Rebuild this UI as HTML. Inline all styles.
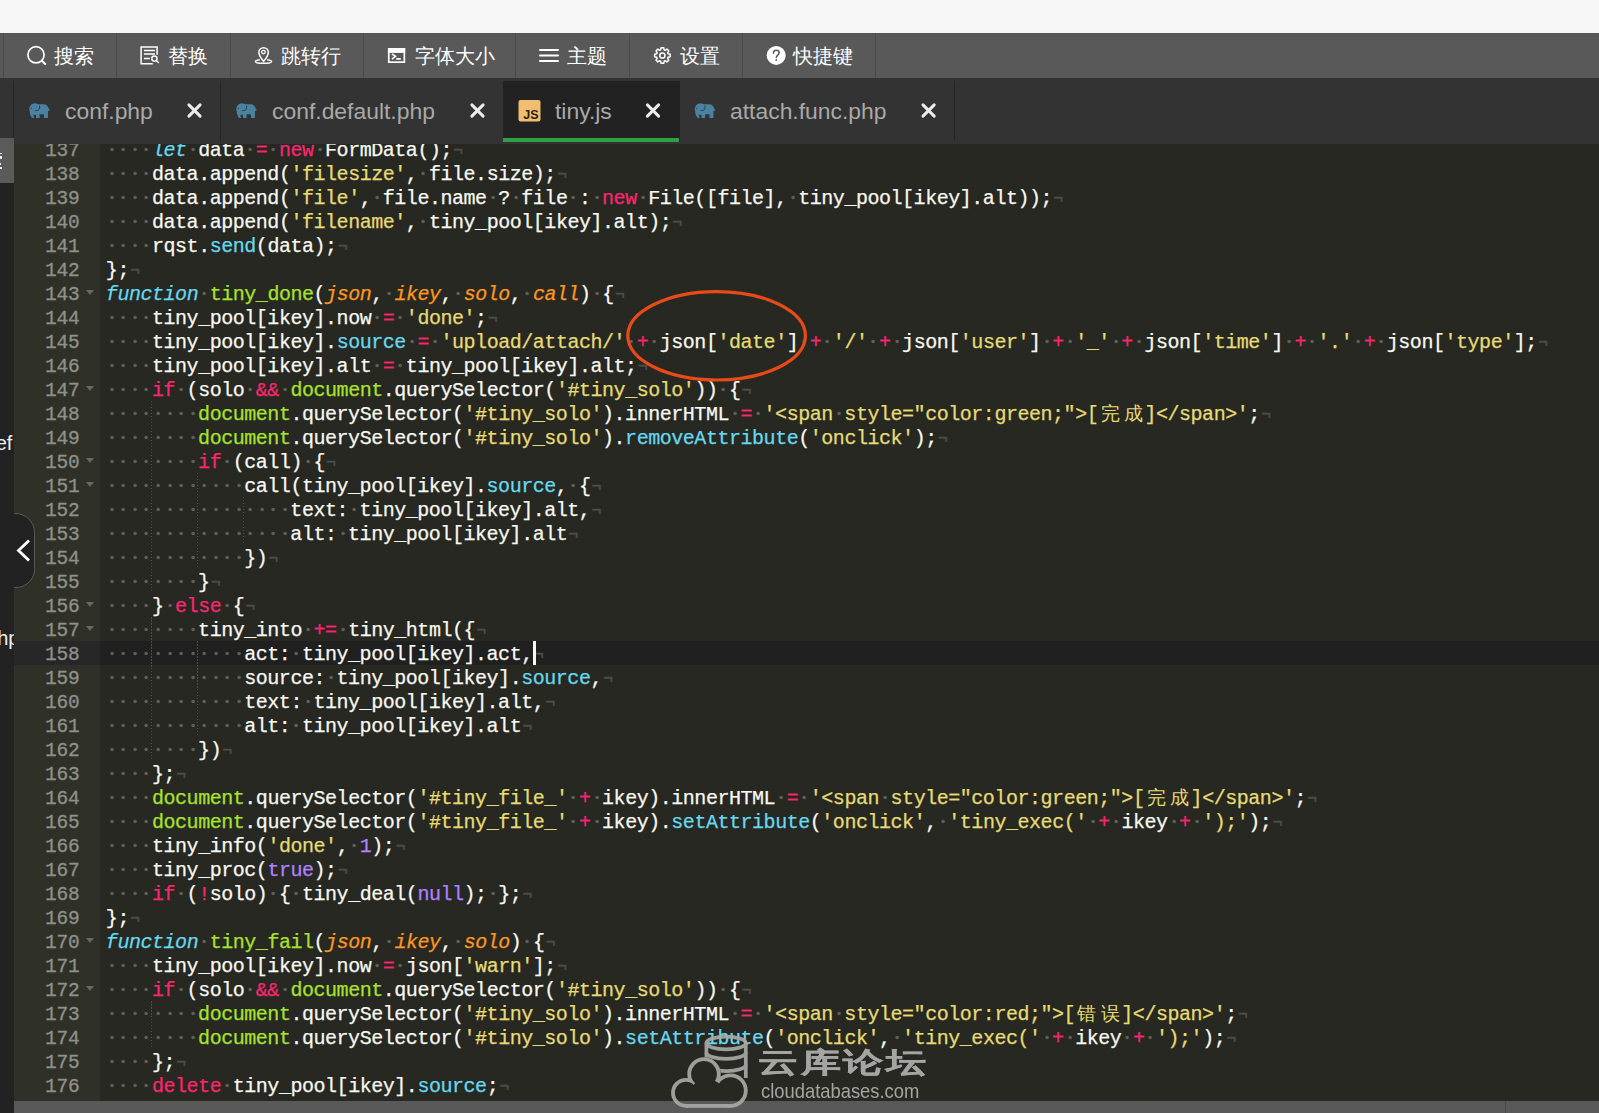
<!DOCTYPE html>
<html><head><meta charset="utf-8">
<style>
*{margin:0;padding:0;box-sizing:border-box}
html,body{width:1599px;height:1113px;overflow:hidden;background:#f7f7f7;font-family:"Liberation Sans",sans-serif}
#top{position:absolute;left:0;top:0;width:1599px;height:33px;background:#f7f7f7}
#tb{position:absolute;left:0;top:33px;width:1599px;height:45px;background:#595959}
.lbl{position:absolute;top:1px;height:45px;color:#fff;font-size:20px;line-height:45px;white-space:nowrap}
.sep{position:absolute;top:0;width:1px;height:45px;background:#4b4b4b}
#tabs{position:absolute;left:0;top:78px;width:1599px;height:66px;background:#333}
.nm{position:absolute;top:81px;line-height:60px;font-size:22.9px;color:#a9a9a9;white-space:nowrap}
.tsep{position:absolute;top:3px;width:1px;height:60px;background:#262626}
#left{position:absolute;left:0;top:138px;width:14px;height:975px;background:#222;overflow:hidden}
#left .f{position:absolute;color:#eee;font-size:20px;line-height:20px;white-space:nowrap}
#gut{position:absolute;left:14px;top:144px;width:86px;height:957px;background:#2f3129;overflow:hidden}
#code{position:absolute;left:100px;top:144px;width:1499px;height:957px;background:#272822;overflow:hidden}
.gn{position:absolute;left:0;width:86px;height:24px;font-family:"Liberation Mono",monospace;font-size:19.5px;letter-spacing:-0.15px;-webkit-text-stroke:0.3px currentColor;line-height:24px;color:#8f908a;padding-left:31px;padding-top:1.5px}
.gn.act{background:#272727}
.gn u{position:absolute;left:71.8px;top:9px;width:0;height:0;border-left:4.2px solid transparent;border-right:4.2px solid transparent;border-top:5px solid #686963}
.ln{position:absolute;left:0;width:1499px;height:24px;font-family:"Liberation Mono",monospace;font-size:20px;letter-spacing:-0.4617px;-webkit-text-stroke:0.25px currentColor;line-height:24px;color:#f8f8f2;white-space:pre;padding-left:5.85px;padding-top:2px}
.ln.act{background:#202020}
.ln i{font-style:normal;display:inline-block;width:11.54px;height:24px;vertical-align:top;margin-top:-2px;color:transparent;background:radial-gradient(circle at 6.1px 12.5px,#5f5f59 0,#5f5f59 1.3px,rgba(95,95,89,0) 2.1px)}
.ln i.e{background:none;color:#4e4e49;margin-top:0;height:auto;width:auto;vertical-align:1px;font-size:16px;position:relative;left:1.3px;-webkit-text-stroke:0.55px currentColor}
.ln b{font-weight:normal;display:inline-block;width:23.08px;text-align:center;font-size:19px;-webkit-text-stroke:0}
.k{color:#f92672}
.st{color:#66d9ef;font-style:italic}
.fn{color:#a6e22e}
.pa{color:#fd971f;font-style:italic}
.s{color:#e6db74}
.sf{color:#66d9ef}
.v{color:#a6e22e}
.c{color:#ae81ff}
.ig{position:absolute;width:1px;background:repeating-linear-gradient(to bottom,#4e4e48 0,#4e4e48 1.5px,transparent 1.5px,transparent 3px)}
#bot{position:absolute;left:14px;top:1101px;width:1585px;height:12px;background:#595959}
</style></head><body>
<div id="top"></div>
<div id="tb">
  <div class="sep" style="left:3px"></div>
  <div class="sep" style="left:116px"></div>
  <div class="sep" style="left:230px"></div>
  <div class="sep" style="left:363px"></div>
  <div class="sep" style="left:515px"></div>
  <div class="sep" style="left:629px"></div>
  <div class="sep" style="left:742px"></div>
  <div class="sep" style="left:875px"></div>
  <svg style="position:absolute;left:0;top:0" width="900" height="45" viewBox="0 0 900 45" fill="none" stroke="#fff">
    <circle cx="36" cy="21.8" r="8.1" stroke-width="1.7"/>
    <path d="M41.9 27.7 L45.2 30.9" stroke-width="2.1" stroke-linecap="round"/>
    <path d="M157.1 21.7 V14.1 H141.1 V30.7 H152.8" stroke-width="1.5"/>
    <path d="M143.9 17.4 H155 M143.9 21 H155 M143.9 25.5 H149.8" stroke-width="1.5"/>
    <circle cx="154.4" cy="25.6" r="2.6" stroke-width="1.4"/>
    <path d="M156.3 27.5 L158.4 29.5" stroke-width="1.6" stroke-linecap="round"/>
    <path d="M263.6 28.4 C260.2 24.2 258.85 21.6 258.85 19.45 A4.75 4.75 0 0 1 268.35 19.45 C268.35 21.6 267 24.2 263.6 28.4 Z" stroke-width="1.5"/>
    <circle cx="263.5" cy="19.1" r="1.8" stroke-width="1.3"/>
    <path d="M259.9 26.7 C257 27.1 255.4 27.7 255.4 28.4 C255.4 29.5 259 30.2 263.5 30.2 C268 30.2 271.6 29.5 271.6 28.4 C271.6 27.7 270 27.1 267.1 26.7" stroke-width="1.5"/>
    <rect x="388.75" y="15.85" width="15.6" height="13.3" stroke-width="1.7"/>
    <rect x="388" y="15" width="17.2" height="4.9" fill="#fff" stroke="none"/>
    <path d="M391.9 20.9 L395.5 23.4 L391.9 26.2" stroke-width="1.6"/>
    <path d="M396.2 25.9 H400.8" stroke-width="1.7"/>
    <path d="M540 17.1 H558 M540 22.4 H558 M540 27.9 H558" stroke-width="2" stroke-linecap="round"/>
    <path d="M660.66 16.86 L661.06 14.71 L663.74 14.71 L664.14 16.86 L665.15 17.28 L666.96 16.05 L668.85 17.94 L667.62 19.75 L668.04 20.76 L670.19 21.16 L670.19 23.84 L668.04 24.24 L667.62 25.25 L668.85 27.06 L666.96 28.95 L665.15 27.72 L664.14 28.14 L663.74 30.29 L661.06 30.29 L660.66 28.14 L659.65 27.72 L657.84 28.95 L655.95 27.06 L657.18 25.25 L656.76 24.24 L654.61 23.84 L654.61 21.16 L656.76 20.76 L657.18 19.75 L655.95 17.94 L657.84 16.05 L659.65 17.28 Z" stroke-width="1.5" stroke-linejoin="round"/>
    <circle cx="662.4" cy="22.5" r="2.6" stroke-width="1.5"/>
    <circle cx="776.2" cy="22.4" r="9.5" fill="#fff" stroke="none"/>
    <path d="M773.4 20.3 C773.4 18.4 774.7 17.3 776.3 17.3 C777.9 17.3 779.1 18.4 779.1 19.8 C779.1 21.9 776.3 22.3 776.3 24.6" stroke="#595959" stroke-width="1.5" stroke-linecap="round"/>
    <circle cx="776.3" cy="26.9" r="0.95" fill="#595959" stroke="none"/>
  </svg>
  <div class="lbl" style="left:54px">搜索</div>
  <div class="lbl" style="left:168px">替换</div>
  <div class="lbl" style="left:281px">跳转行</div>
  <div class="lbl" style="left:415px">字体大小</div>
  <div class="lbl" style="left:567px">主题</div>
  <div class="lbl" style="left:680px">设置</div>
  <div class="lbl" style="left:793px">快捷键</div>
</div>
<div id="tabs">
  <div class="tsep" style="left:13px"></div>
  <div class="tsep" style="left:220px"></div>
  <div class="tsep" style="left:954px"></div>
  <div style="position:absolute;left:503px;top:3px;width:177px;height:61px;background:#222"></div>
  <div style="position:absolute;left:503px;top:60px;width:176px;height:4px;background:#2ea043"></div>
</div>
<svg style="position:absolute;left:0;top:0" width="1000" height="145" viewBox="0 0 1000 145">
  <defs>
    <g id="eleph">
      <ellipse cx="5.9" cy="6.1" rx="5.7" ry="5.9" fill="#4b82a0"/>
      <path d="M8 1.2 H14.5 C17.5 1.2 19 3 19.6 5.2 L21 7.2 L19 7.9 L18.9 15 H15 V11.3 H10.6 V15 H7 V9 Z" fill="#4b82a0"/>
      <path d="M0.6 8.5 C0.8 11.5 1.8 13.3 3.2 15 L5.4 15 C4.5 13.4 3.9 11.8 4.4 10 Z" fill="#4b82a0"/>
      <path d="M6.2 7.4 C9.4 8.2 11.2 6.2 10.4 2.6" fill="none" stroke="#23394a" stroke-width="0.9"/>
      <circle cx="2.3" cy="5.3" r="0.6" fill="#23394a"/>
    </g>
    <path id="xx" d="M1.7 1.7 L12.9 12.9 M12.9 1.7 L1.7 12.9" stroke="#ececec" stroke-width="3" stroke-linecap="round"/>
  </defs>
  <use href="#eleph" x="29" y="103"/>
  <use href="#eleph" x="236" y="103"/>
  <use href="#eleph" x="694.5" y="103"/>
  <use href="#xx" x="187.2" y="103.2"/>
  <use href="#xx" x="470.2" y="103.2"/>
  <use href="#xx" x="645.7" y="103.2"/>
  <use href="#xx" x="921.3" y="103.2"/>
  <rect x="518.5" y="100" width="22" height="21.5" rx="2" fill="#f1bd70"/>
  <text x="538.5" y="119" text-anchor="end" font-family="Liberation Sans" font-size="12.5" font-weight="bold" fill="#2a1d0f">JS</text>
</svg>
<div class="nm" style="left:65px">conf.php</div>
<div class="nm" style="left:272px">conf.default.php</div>
<div class="nm" style="left:555px">tiny.js</div>
<div class="nm" style="left:730px">attach.func.php</div>
<div id="left">
  <div style="position:absolute;left:0;top:0;width:14px;height:45px;background:#5a5a5a"><div style="position:absolute;left:0;top:14.6px;width:1.9px;height:1.6px;background:#eee"></div><div style="position:absolute;left:0;top:17.8px;width:2px;height:3.4px;background:#eee"></div><div style="position:absolute;left:0;top:25px;width:1.2px;height:1.9px;background:#eee"></div><div style="position:absolute;left:0;top:29.1px;width:2px;height:2.2px;background:#eee"></div></div>
  <div class="f" style="left:-4.3px;top:295px">ef</div>
  <div class="f" style="left:-2.8px;top:490px">hp</div>
</div>
<div id="gut">
<div style="position:absolute;left:0;top:-144px">
<div class="gn" style="top:137px">137</div>
<div class="gn" style="top:161px">138</div>
<div class="gn" style="top:185px">139</div>
<div class="gn" style="top:209px">140</div>
<div class="gn" style="top:233px">141</div>
<div class="gn" style="top:257px">142</div>
<div class="gn" style="top:281px">143<u></u></div>
<div class="gn" style="top:305px">144</div>
<div class="gn" style="top:329px">145</div>
<div class="gn" style="top:353px">146</div>
<div class="gn" style="top:377px">147<u></u></div>
<div class="gn" style="top:401px">148</div>
<div class="gn" style="top:425px">149</div>
<div class="gn" style="top:449px">150<u></u></div>
<div class="gn" style="top:473px">151<u></u></div>
<div class="gn" style="top:497px">152</div>
<div class="gn" style="top:521px">153</div>
<div class="gn" style="top:545px">154</div>
<div class="gn" style="top:569px">155</div>
<div class="gn" style="top:593px">156<u></u></div>
<div class="gn" style="top:617px">157<u></u></div>
<div class="gn act" style="top:641px">158</div>
<div class="gn" style="top:665px">159</div>
<div class="gn" style="top:689px">160</div>
<div class="gn" style="top:713px">161</div>
<div class="gn" style="top:737px">162</div>
<div class="gn" style="top:761px">163</div>
<div class="gn" style="top:785px">164</div>
<div class="gn" style="top:809px">165</div>
<div class="gn" style="top:833px">166</div>
<div class="gn" style="top:857px">167</div>
<div class="gn" style="top:881px">168</div>
<div class="gn" style="top:905px">169</div>
<div class="gn" style="top:929px">170<u></u></div>
<div class="gn" style="top:953px">171</div>
<div class="gn" style="top:977px">172<u></u></div>
<div class="gn" style="top:1001px">173</div>
<div class="gn" style="top:1025px">174</div>
<div class="gn" style="top:1049px">175</div>
<div class="gn" style="top:1073px">176</div>
<div class="gn" style="top:1097px">177</div>
</div>
</div>
<div id="code">
<div style="position:absolute;left:0;top:-144px">
<div class="ln" style="top:137px"><i>·</i><i>·</i><i>·</i><i>·</i><span class="st">let</span><i>·</i>data<i>·</i><span class="k">=</span><i>·</i><span class="k">new</span><i>·</i>FormData();<i class="e">¬</i></div>
<div class="ln" style="top:161px"><i>·</i><i>·</i><i>·</i><i>·</i>data.append(<span class="s">'filesize'</span>,<i>·</i>file.size);<i class="e">¬</i></div>
<div class="ln" style="top:185px"><i>·</i><i>·</i><i>·</i><i>·</i>data.append(<span class="s">'file'</span>,<i>·</i>file.name<i>·</i>?<i>·</i>file<i>·</i>:<i>·</i><span class="k">new</span><i>·</i>File([file],<i>·</i>tiny_pool[ikey].alt));<i class="e">¬</i></div>
<div class="ln" style="top:209px"><i>·</i><i>·</i><i>·</i><i>·</i>data.append(<span class="s">'filename'</span>,<i>·</i>tiny_pool[ikey].alt);<i class="e">¬</i></div>
<div class="ln" style="top:233px"><i>·</i><i>·</i><i>·</i><i>·</i>rqst.<span class="sf">send</span>(data);<i class="e">¬</i></div>
<div class="ln" style="top:257px">};<i class="e">¬</i></div>
<div class="ln" style="top:281px"><span class="st">function</span><i>·</i><span class="fn">tiny_done</span>(<span class="pa">json</span>,<i>·</i><span class="pa">ikey</span>,<i>·</i><span class="pa">solo</span>,<i>·</i><span class="pa">call</span>)<i>·</i>{<i class="e">¬</i></div>
<div class="ln" style="top:305px"><i>·</i><i>·</i><i>·</i><i>·</i>tiny_pool[ikey].now<i>·</i><span class="k">=</span><i>·</i><span class="s">'done'</span>;<i class="e">¬</i></div>
<div class="ln" style="top:329px"><i>·</i><i>·</i><i>·</i><i>·</i>tiny_pool[ikey].<span class="sf">source</span><i>·</i><span class="k">=</span><i>·</i><span class="s">'upload/attach/'</span><i>·</i><span class="k">+</span><i>·</i>json[<span class="s">'date'</span>]<i>·</i><span class="k">+</span><i>·</i><span class="s">'/'</span><i>·</i><span class="k">+</span><i>·</i>json[<span class="s">'user'</span>]<i>·</i><span class="k">+</span><i>·</i><span class="s">'_'</span><i>·</i><span class="k">+</span><i>·</i>json[<span class="s">'time'</span>]<i>·</i><span class="k">+</span><i>·</i><span class="s">'.'</span><i>·</i><span class="k">+</span><i>·</i>json[<span class="s">'type'</span>];<i class="e">¬</i></div>
<div class="ln" style="top:353px"><i>·</i><i>·</i><i>·</i><i>·</i>tiny_pool[ikey].alt<i>·</i><span class="k">=</span><i>·</i>tiny_pool[ikey].alt;<i class="e">¬</i></div>
<div class="ln" style="top:377px"><i>·</i><i>·</i><i>·</i><i>·</i><span class="k">if</span><i>·</i>(solo<i>·</i><span class="k">&amp;&amp;</span><i>·</i><span class="v">document</span>.querySelector(<span class="s">'#tiny_solo'</span>))<i>·</i>{<i class="e">¬</i></div>
<div class="ln" style="top:401px"><i>·</i><i>·</i><i>·</i><i>·</i><i>·</i><i>·</i><i>·</i><i>·</i><span class="v">document</span>.querySelector(<span class="s">'#tiny_solo'</span>).innerHTML<i>·</i><span class="k">=</span><i>·</i><span class="s">'&lt;span<i>·</i>style="color:green;"&gt;[<b>完</b><b>成</b>]&lt;/span&gt;'</span>;<i class="e">¬</i></div>
<div class="ln" style="top:425px"><i>·</i><i>·</i><i>·</i><i>·</i><i>·</i><i>·</i><i>·</i><i>·</i><span class="v">document</span>.querySelector(<span class="s">'#tiny_solo'</span>).<span class="sf">removeAttribute</span>(<span class="s">'onclick'</span>);<i class="e">¬</i></div>
<div class="ln" style="top:449px"><i>·</i><i>·</i><i>·</i><i>·</i><i>·</i><i>·</i><i>·</i><i>·</i><span class="k">if</span><i>·</i>(call)<i>·</i>{<i class="e">¬</i></div>
<div class="ln" style="top:473px"><i>·</i><i>·</i><i>·</i><i>·</i><i>·</i><i>·</i><i>·</i><i>·</i><i>·</i><i>·</i><i>·</i><i>·</i>call(tiny_pool[ikey].<span class="sf">source</span>,<i>·</i>{<i class="e">¬</i></div>
<div class="ln" style="top:497px"><i>·</i><i>·</i><i>·</i><i>·</i><i>·</i><i>·</i><i>·</i><i>·</i><i>·</i><i>·</i><i>·</i><i>·</i><i>·</i><i>·</i><i>·</i><i>·</i>text:<i>·</i>tiny_pool[ikey].alt,<i class="e">¬</i></div>
<div class="ln" style="top:521px"><i>·</i><i>·</i><i>·</i><i>·</i><i>·</i><i>·</i><i>·</i><i>·</i><i>·</i><i>·</i><i>·</i><i>·</i><i>·</i><i>·</i><i>·</i><i>·</i>alt:<i>·</i>tiny_pool[ikey].alt<i class="e">¬</i></div>
<div class="ln" style="top:545px"><i>·</i><i>·</i><i>·</i><i>·</i><i>·</i><i>·</i><i>·</i><i>·</i><i>·</i><i>·</i><i>·</i><i>·</i>})<i class="e">¬</i></div>
<div class="ln" style="top:569px"><i>·</i><i>·</i><i>·</i><i>·</i><i>·</i><i>·</i><i>·</i><i>·</i>}<i class="e">¬</i></div>
<div class="ln" style="top:593px"><i>·</i><i>·</i><i>·</i><i>·</i>}<i>·</i><span class="k">else</span><i>·</i>{<i class="e">¬</i></div>
<div class="ln" style="top:617px"><i>·</i><i>·</i><i>·</i><i>·</i><i>·</i><i>·</i><i>·</i><i>·</i>tiny_into<i>·</i><span class="k">+=</span><i>·</i>tiny_html({<i class="e">¬</i></div>
<div class="ln act" style="top:641px"><i>·</i><i>·</i><i>·</i><i>·</i><i>·</i><i>·</i><i>·</i><i>·</i><i>·</i><i>·</i><i>·</i><i>·</i>act:<i>·</i>tiny_pool[ikey].act,<i class="e">¬</i></div>
<div class="ln" style="top:665px"><i>·</i><i>·</i><i>·</i><i>·</i><i>·</i><i>·</i><i>·</i><i>·</i><i>·</i><i>·</i><i>·</i><i>·</i>source:<i>·</i>tiny_pool[ikey].<span class="sf">source</span>,<i class="e">¬</i></div>
<div class="ln" style="top:689px"><i>·</i><i>·</i><i>·</i><i>·</i><i>·</i><i>·</i><i>·</i><i>·</i><i>·</i><i>·</i><i>·</i><i>·</i>text:<i>·</i>tiny_pool[ikey].alt,<i class="e">¬</i></div>
<div class="ln" style="top:713px"><i>·</i><i>·</i><i>·</i><i>·</i><i>·</i><i>·</i><i>·</i><i>·</i><i>·</i><i>·</i><i>·</i><i>·</i>alt:<i>·</i>tiny_pool[ikey].alt<i class="e">¬</i></div>
<div class="ln" style="top:737px"><i>·</i><i>·</i><i>·</i><i>·</i><i>·</i><i>·</i><i>·</i><i>·</i>})<i class="e">¬</i></div>
<div class="ln" style="top:761px"><i>·</i><i>·</i><i>·</i><i>·</i>};<i class="e">¬</i></div>
<div class="ln" style="top:785px"><i>·</i><i>·</i><i>·</i><i>·</i><span class="v">document</span>.querySelector(<span class="s">'#tiny_file_'</span><i>·</i><span class="k">+</span><i>·</i>ikey).innerHTML<i>·</i><span class="k">=</span><i>·</i><span class="s">'&lt;span<i>·</i>style="color:green;"&gt;[<b>完</b><b>成</b>]&lt;/span&gt;'</span>;<i class="e">¬</i></div>
<div class="ln" style="top:809px"><i>·</i><i>·</i><i>·</i><i>·</i><span class="v">document</span>.querySelector(<span class="s">'#tiny_file_'</span><i>·</i><span class="k">+</span><i>·</i>ikey).<span class="sf">setAttribute</span>(<span class="s">'onclick'</span>,<i>·</i><span class="s">'tiny_exec('</span><i>·</i><span class="k">+</span><i>·</i>ikey<i>·</i><span class="k">+</span><i>·</i><span class="s">');'</span>);<i class="e">¬</i></div>
<div class="ln" style="top:833px"><i>·</i><i>·</i><i>·</i><i>·</i>tiny_info(<span class="s">'done'</span>,<i>·</i><span class="c">1</span>);<i class="e">¬</i></div>
<div class="ln" style="top:857px"><i>·</i><i>·</i><i>·</i><i>·</i>tiny_proc(<span class="c">true</span>);<i class="e">¬</i></div>
<div class="ln" style="top:881px"><i>·</i><i>·</i><i>·</i><i>·</i><span class="k">if</span><i>·</i>(<span class="k">!</span>solo)<i>·</i>{<i>·</i>tiny_deal(<span class="c">null</span>);<i>·</i>};<i class="e">¬</i></div>
<div class="ln" style="top:905px">};<i class="e">¬</i></div>
<div class="ln" style="top:929px"><span class="st">function</span><i>·</i><span class="fn">tiny_fail</span>(<span class="pa">json</span>,<i>·</i><span class="pa">ikey</span>,<i>·</i><span class="pa">solo</span>)<i>·</i>{<i class="e">¬</i></div>
<div class="ln" style="top:953px"><i>·</i><i>·</i><i>·</i><i>·</i>tiny_pool[ikey].now<i>·</i><span class="k">=</span><i>·</i>json[<span class="s">'warn'</span>];<i class="e">¬</i></div>
<div class="ln" style="top:977px"><i>·</i><i>·</i><i>·</i><i>·</i><span class="k">if</span><i>·</i>(solo<i>·</i><span class="k">&amp;&amp;</span><i>·</i><span class="v">document</span>.querySelector(<span class="s">'#tiny_solo'</span>))<i>·</i>{<i class="e">¬</i></div>
<div class="ln" style="top:1001px"><i>·</i><i>·</i><i>·</i><i>·</i><i>·</i><i>·</i><i>·</i><i>·</i><span class="v">document</span>.querySelector(<span class="s">'#tiny_solo'</span>).innerHTML<i>·</i><span class="k">=</span><i>·</i><span class="s">'&lt;span<i>·</i>style="color:red;"&gt;[<b>错</b><b>误</b>]&lt;/span&gt;'</span>;<i class="e">¬</i></div>
<div class="ln" style="top:1025px"><i>·</i><i>·</i><i>·</i><i>·</i><i>·</i><i>·</i><i>·</i><i>·</i><span class="v">document</span>.querySelector(<span class="s">'#tiny_solo'</span>).<span class="sf">setAttribute</span>(<span class="s">'onclick'</span>,<i>·</i><span class="s">'tiny_exec('</span><i>·</i><span class="k">+</span><i>·</i>ikey<i>·</i><span class="k">+</span><i>·</i><span class="s">');'</span>);<i class="e">¬</i></div>
<div class="ln" style="top:1049px"><i>·</i><i>·</i><i>·</i><i>·</i>};<i class="e">¬</i></div>
<div class="ln" style="top:1073px"><i>·</i><i>·</i><i>·</i><i>·</i><span class="k">delete</span><i>·</i>tiny_pool[ikey].<span class="sf">source</span>;<i class="e">¬</i></div>
<div class="ln" style="top:1097px"><i>·</i><i>·</i><i>·</i><i>·</i><span class="v">document</span>.querySelector(<span class="s">'#tiny_file_'</span><i>·</i><span class="k">+</span><i>·</i>ikey).innerHTML<i>·</i><span class="k">=</span><i>·</i><span class="s">'&lt;span<i>·</i>style="color:red;"&gt;[<b>错</b><b>误</b>]&lt;/span&gt;'</span>;<i class="e">¬</i></div>
<div class="ig" style="left:51.11px;top:401px;height:192px"></div>
<div class="ig" style="left:97.27px;top:473px;height:96px"></div>
<div class="ig" style="left:143.43px;top:497px;height:48px"></div>
<div class="ig" style="left:51.11px;top:617px;height:144px"></div>
<div class="ig" style="left:97.27px;top:641px;height:96px"></div>
<div class="ig" style="left:51.11px;top:1001px;height:48px"></div>
</div>
</div>
<div id="bot"><div style="position:absolute;left:1491px;top:0;width:1px;height:12px;background:#4b4b4b"></div></div>
<svg style="position:absolute;left:14px;top:510px" width="24" height="80" viewBox="0 0 24 80">
  <path d="M0 3.5 H0.5 A19 19 0 0 1 20.5 22.5 V55.5 A19 19 0 0 1 0.5 77.5 H0" fill="#222" stroke="#5a5a55" stroke-width="1"/>
  <path d="M15 30.5 L4.5 40.5 L15 50.5" fill="none" stroke="#fff" stroke-width="2.8"/>
</svg>
<div id="cursor" style="position:absolute;left:533.4px;top:640.5px;width:3px;height:24px;background:#f8f8f0"></div>
<svg style="position:absolute;left:0;top:0" width="1599" height="1113" viewBox="0 0 1599 1113">
  <ellipse cx="716.6" cy="335.8" rx="88.8" ry="44.2" fill="none" stroke="#e84a18" stroke-width="3.2"/>
  <defs>
    <mask id="cloudOuter" maskUnits="userSpaceOnUse" x="0" y="0" width="1599" height="1113">
      <rect x="0" y="0" width="1599" height="1113" fill="#fff"/>
      <circle cx="686" cy="1092.8" r="14.9" fill="#000"/>
      <circle cx="704" cy="1074" r="16.7" fill="#000"/>
      <circle cx="730.5" cy="1090.6" r="17.2" fill="#000"/>
      <rect x="686" y="1090" width="44" height="17.8" fill="#000"/>
    </mask>
    <mask id="cloudRing" maskUnits="userSpaceOnUse" x="0" y="0" width="1599" height="1113">
      <circle cx="686" cy="1092.8" r="14.9" fill="#fff"/>
      <circle cx="704" cy="1074" r="16.7" fill="#fff"/>
      <circle cx="730.5" cy="1090.6" r="17.2" fill="#fff"/>
      <rect x="686" y="1090" width="44" height="17.8" fill="#fff"/>
      <circle cx="686" cy="1092.8" r="11.1" fill="#000"/>
      <circle cx="704" cy="1074" r="12.9" fill="#000"/>
      <circle cx="730.5" cy="1090.6" r="13.4" fill="#000"/>
      <rect x="686" y="1088" width="44" height="16" fill="#000"/>
      <polygon points="686,1092.8 704,1074 730.5,1090.6 730.5,1104 686,1104" fill="#000"/>
    </mask>
  </defs>
  <g opacity="0.92">
    <g mask="url(#cloudOuter)" fill="none" stroke="#a9a9a6" stroke-width="3.7">
      <ellipse cx="726.1" cy="1043" rx="19.7" ry="6.4"/>
      <path d="M706.4 1052.5 A19.7 6.4 0 0 0 745.8 1052.5"/>
      <path d="M706.4 1064.8 A19.7 6.4 0 0 0 745.8 1064.8"/>
      <path d="M706.4 1043 V1078 M745.8 1043 V1078"/>
    </g>
    <rect x="660" y="1050" width="100" height="63" fill="#a9a9a6" mask="url(#cloudRing)"/>
  </g>
</svg>
<div style="position:absolute;left:758px;top:1047px;color:#a5a5a1;font-family:'Liberation Serif',serif;font-weight:bold;font-size:40px;line-height:44px;white-space:nowrap;letter-spacing:2.5px;transform:scaleY(0.7);transform-origin:0 0;-webkit-text-stroke:0.6px #a5a5a1">云库论坛</div>
<div style="position:absolute;left:761px;top:1078.5px;color:#a5a5a1;font-family:'Liberation Sans',sans-serif;font-size:21px;line-height:24px;white-space:nowrap;transform:scaleX(0.875);transform-origin:0 0">cloudatabases.com</div>
</body></html>
